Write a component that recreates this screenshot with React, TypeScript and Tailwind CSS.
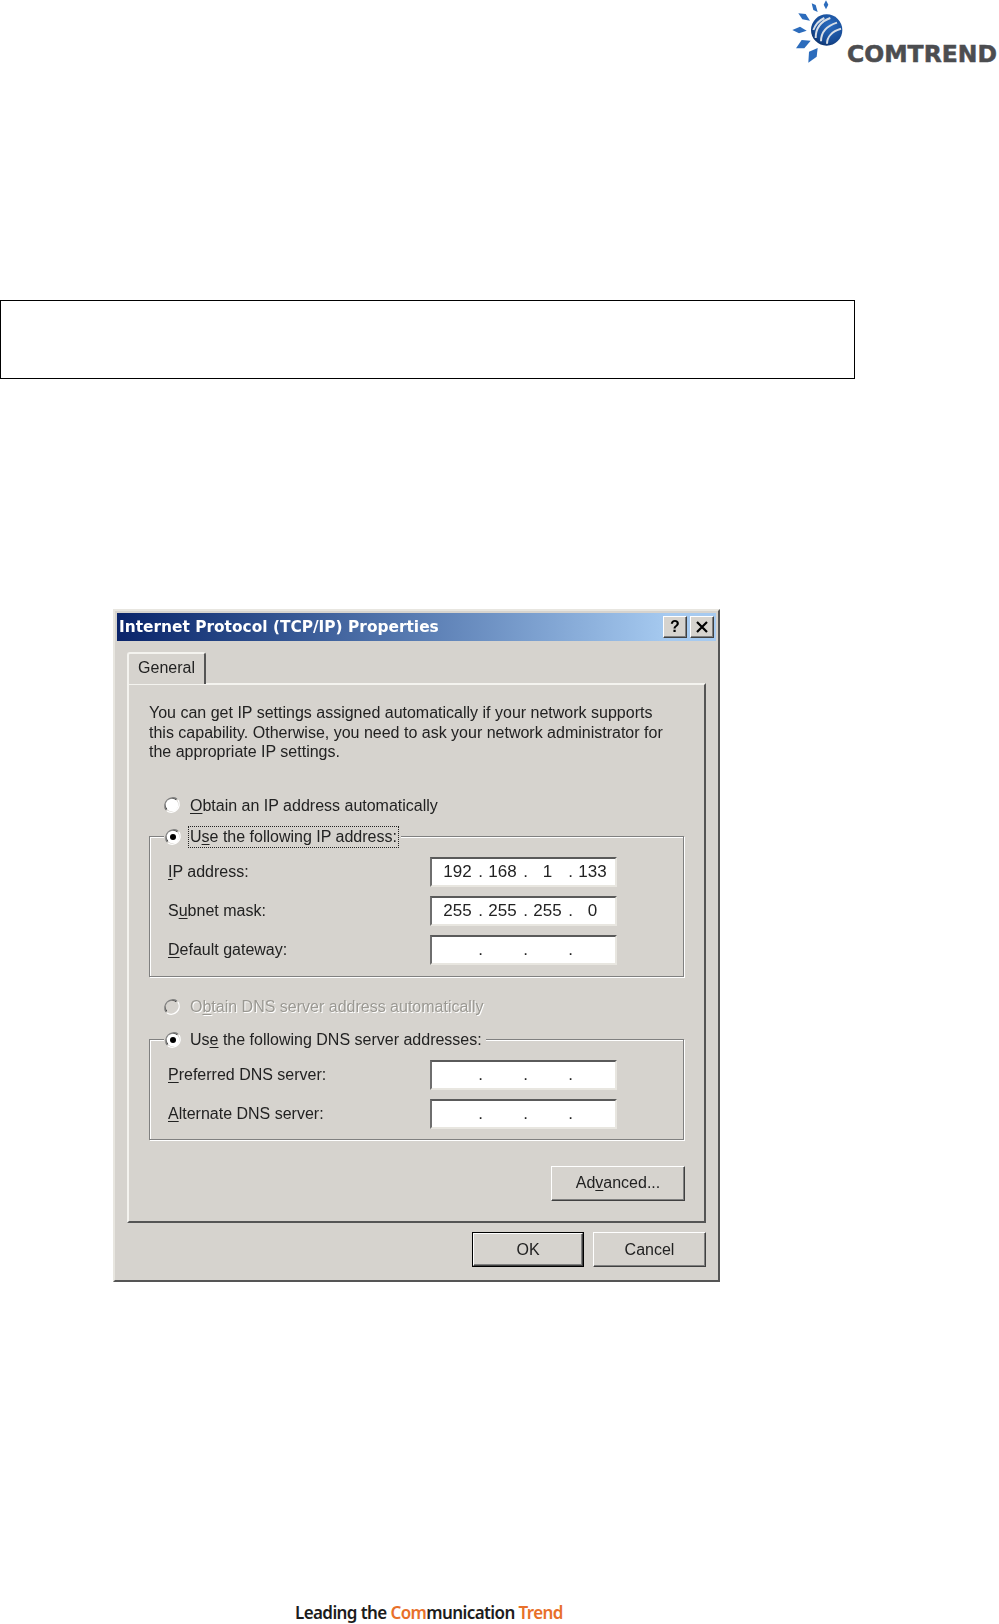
const sans = "font-['Liberation_Sans',Arial,sans-serif]";

function Radio({ checked, disabled }: { checked?: boolean; disabled?: boolean }) {
  return (
    <svg width="18" height="18" viewBox="0 0 18 18" className="shrink-0">
      <path d="M3 14 A8 8 0 0 1 14 3" fill="none" stroke="#808080" strokeWidth="1.4" />
      <path d="M3.8 13.2 A7 7 0 0 1 13.2 3.8" fill="none" stroke="#404040" strokeWidth="1.2" />
      <circle cx="9" cy="9" r="6.3" fill={disabled ? "#d6d3ce" : "#fff"} />
      <path d="M15 4 A8 8 0 0 1 4 15" fill="none" stroke="#fff" strokeWidth="1.4" />
      {checked && <circle cx="9" cy="9" r="3" fill="#000" />}
    </svg>
  );
}

function IpField({ values }: { values?: string[] }) {
  const parts = values ?? ["", "", "", ""];
  return (
    <div className="w-[187px] h-[30px] bg-white border-2 border-t-[#5a5a5a] border-l-[#6e6e6e] border-r-[#e8e6e0] border-b-[#e8e6e0] flex items-center text-[17px] text-[#222]">
      {parts.map((p, i) => (
        <div key={i} className="relative w-[45px] text-center first:ml-[3px]">
          {p || "\u00a0"}
          {i < 3 && <span className="absolute right-[-3px] top-0">.</span>}
        </div>
      ))}
    </div>
  );
}

function FieldRow({ label, values }: { label: [string, string, string]; values?: string[] }) {
  return (
    <div className="flex items-center">
      <span className="w-[262px]">
        {label[0]}
        <span className="underline underline-offset-2">{label[1]}</span>
        {label[2]}
      </span>
      <IpField values={values} />
    </div>
  );
}

function Group({ legend, u, rows, className }: { legend: [string, string, string]; u?: boolean; rows: React.ReactNode; className: string }) {
  return (
    <div className={`relative w-[535px] border border-[#808080] shadow-[1px_1px_0_#fff,inset_1px_1px_0_#fff] ${className}`}>
      <div className="absolute left-[14px] top-[-10px] flex items-center gap-[7px] bg-[#d6d3ce] pr-[3px]">
        <Radio checked />
        <span className={`leading-[20px] px-[1px] ${u ? "outline-1 outline-dotted outline-[#222]" : ""}`}>
          {legend[0]}
          <span className="underline underline-offset-2">{legend[1]}</span>
          {legend[2]}
        </span>
      </div>
      <div className="flex flex-col gap-[9px] pl-[18px]">{rows}</div>
    </div>
  );
}

function WinButton({ children, className }: { children: React.ReactNode; className: string }) {
  return (
    <button className={`bg-[#d6d3ce] border border-t-white border-l-white border-r-[#404040] border-b-[#404040] shadow-[inset_-1px_-1px_0_#808080] text-[16px] text-[#222] ${className}`}>
      {children}
    </button>
  );
}

function Logo() {
  const petals = [
    "M123 1 L130 14 L123 28 L116 14 Z",
    "M80 10 L92 15 L98 36 L85 30 Z",
    "M40 40 L62 42 L75 62 L52 58 Z",
    "M22 90 L45 80 L65 92 L42 100 Z",
    "M33 145 L50 120 L77 122 L58 145 Z",
    "M70 188 L72 155 L98 144 L95 170 Z",
  ];
  return (
    <div className="relative w-[219px] h-[70px]">
      <svg width="70" height="66" viewBox="0 0 210 198" className="absolute left-[5px] top-0">
        <defs>
          <radialGradient id="globe" cx="0.6" cy="0.35" r="0.75">
            <stop offset="0" stopColor="#2a6cc0" />
            <stop offset="0.7" stopColor="#164a94" />
            <stop offset="1" stopColor="#0c2a5c" />
          </radialGradient>
        </defs>
        {petals.map((d) => (
          <path key={d} d={d} fill="#2c6cbc" />
        ))}
        <circle cx="125" cy="90" r="47" fill="url(#globe)" />
        <path
          d="M85 90 C92 72 105 60 118 54 M92 114 C92 86 108 64 136 54 M108 124 C108 98 124 78 156 68 M126 131 C126 112 140 94 168 86"
          fill="none"
          stroke="#d8dee6"
          strokeWidth="6"
        />
      </svg>
      <span className="absolute left-[67px] top-[39px] font-['DejaVu_Sans',sans-serif] font-bold text-[23.5px] leading-[30px] text-[#4c4d50] [-webkit-text-stroke:0.5px_#4c4d50] whitespace-nowrap">
        COMTREND
      </span>
    </div>
  );
}

export default function App() {
  return (
    <div className={`relative w-[999px] h-[1624px] bg-white overflow-hidden ${sans}`}>
      <div className="flex justify-end h-[300px]">
        <Logo />
      </div>
      <div className="w-[855px] h-[79px] border border-black" />

      <div className="mt-[230px] ml-[113px] w-[607px] h-[673px] bg-[#d6d3ce] border-2 border-t-[#e8e6e0] border-l-[#e8e6e0] border-r-[#555] border-b-[#555] p-[2px] text-[16px] leading-[19.5px] text-[#222] blur-[0.3px]">
        <div className="h-[28px] flex items-center justify-between bg-linear-to-r from-[#0a246a] to-[#a6caf0] to-[92%] pl-[2px] pr-[2px]">
          <span className="font-['DejaVu_Sans',sans-serif] font-bold text-white text-[15.4px] pt-[2px]">
            Internet Protocol (TCP/IP) Properties
          </span>
          <div className="flex gap-[3px]">
            <WinButton className="w-[24px] h-[22px] flex items-center justify-center font-bold !text-black">?</WinButton>
            <WinButton className="w-[24px] h-[22px] flex items-center justify-center !text-black">
              <svg width="14" height="12" viewBox="0 0 14 12">
                <path d="M2 1 L12 11 M12 1 L2 11" stroke="#000" strokeWidth="2.2" />
              </svg>
            </WinButton>
          </div>
        </div>

        <div className="ml-[10px] mt-[11px] w-[579px]">
          <div className="w-[79px] h-[32px] pb-[2px] flex items-center justify-center border-t-2 border-l-2 border-r-2 border-t-[#f4f3ef] border-l-[#f4f3ef] border-r-[#555] rounded-t-[3px] relative z-10 -mb-[1px] bg-[#d6d3ce]">
            General
          </div>
          <div className="h-[540px] border-2 border-t-[#f4f3ef] border-l-[#f4f3ef] border-r-[#555] border-b-[#555] pt-[18px] pl-[20px]">
            <p>
              You can get IP settings assigned automatically if your network supports
              <br />
              this capability. Otherwise, you need to ask your network administrator for
              <br />
              the appropriate IP settings.
            </p>
            <div className="flex items-center gap-[9px] ml-[14px] mt-[34px]">
              <Radio />
              <span>
                <span className="underline underline-offset-2">O</span>btain an IP address automatically
              </span>
            </div>

            <Group
              legend={["U", "s", "e the following IP address:"]}
              u
              className="h-[141px] mt-[21px] pt-[20px]"
              rows={
                <>
                  <FieldRow label={["", "I", "P address:"]} values={["192", "168", "1", "133"]} />
                  <FieldRow label={["S", "u", "bnet mask:"]} values={["255", "255", "255", "0"]} />
                  <FieldRow label={["", "D", "efault gateway:"]} />
                </>
              }
            />

            <div className="flex items-center gap-[9px] ml-[14px] mt-[20px] text-[#9a9892] [text-shadow:1px_1px_0_#fff]">
              <Radio disabled />
              <span>
                O<span className="underline underline-offset-2">b</span>tain DNS server address automatically
              </span>
            </div>

            <Group
              legend={["Us", "e", " the following DNS server addresses:"]}
              className="h-[101px] mt-[22px] pt-[20px]"
              rows={
                <>
                  <FieldRow label={["", "P", "referred DNS server:"]} />
                  <FieldRow label={["", "A", "lternate DNS server:"]} />
                </>
              }
            />

            <div className="flex justify-end w-[536px] mt-[26px]">
              <WinButton className="w-[134px] h-[35px]">
                Ad<span className="underline underline-offset-2">v</span>anced...
              </WinButton>
            </div>
          </div>
          <div className="flex justify-end items-center gap-[10px] mt-[9px]">
            <WinButton className="w-[110px] h-[33px] outline-1 outline-black">OK</WinButton>
            <WinButton className="w-[113px] h-[35px]">Cancel</WinButton>
          </div>
        </div>
      </div>

      <div className="absolute left-[295px] bottom-0 h-[23px] font-['Noto_Sans',sans-serif] font-semibold text-[17px] leading-[24px] tracking-[-0.6px] text-[#1c1c1c] whitespace-nowrap">
        Leading the <span className="text-[#e8702a]">Com</span>munication <span className="text-[#e8702a]">Trend</span>
      </div>
    </div>
  );
}
